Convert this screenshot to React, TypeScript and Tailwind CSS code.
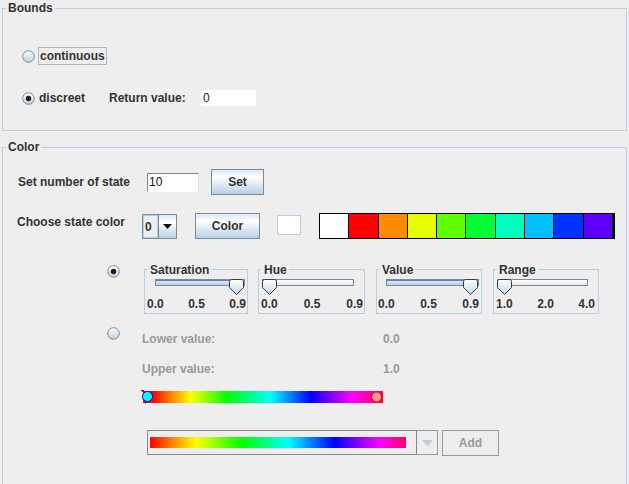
import React from "react";

const Radio = ({ checked = false }: { checked?: boolean }) => (
  <svg width="13" height="13" viewBox="0 0 13 13" className="shrink-0 block">
    <defs>
      <linearGradient id="rgrad" x1="0" y1="0" x2="0" y2="1">
        <stop offset="0" stopColor="#ffffff" />
        <stop offset="1" stopColor="#bccde2" />
      </linearGradient>
    </defs>
    <circle cx="6.5" cy="6.5" r="5.8" fill="url(#rgrad)" stroke="#7a8a99" strokeWidth="1" />
    {checked && <circle cx="6.5" cy="6.5" r="2.7" fill="#1e1e1e" />}
  </svg>
);

const Thumb = ({ cls }: { cls: string }) => (
  <svg width="15" height="16" viewBox="0 0 15 16" className={`absolute top-0 ${cls}`}>
    <defs>
      <linearGradient id="tgrad" x1="0" y1="0" x2="0" y2="1">
        <stop offset="0" stopColor="#ffffff" />
        <stop offset="1" stopColor="#c5d6ea" />
      </linearGradient>
    </defs>
    <path
      d="M0.5 2.5 Q0.5 0.5 2.5 0.5 H12.5 Q14.5 0.5 14.5 2.5 V8.5 L7.5 15.5 L0.5 8.5 Z"
      fill="url(#tgrad)"
      stroke="#3a3a3a"
      strokeWidth="1"
    />
  </svg>
);

const btn =
  "flex items-center justify-center border border-[#7a8a99] bg-[linear-gradient(to_bottom,#dde8f3_0%,#ffffff_30%,#b8cfe5_100%)] text-[#333333]";

type SP = {
  title: string;
  panelCls: string;
  trackCls: string;
  fillCls?: string;
  thumbCls: string;
  labels: [string, string, string];
  labelsCls: string;
};

const SliderPanel = ({ title, panelCls, trackCls, fillCls, thumbCls, labels, labelsCls }: SP) => (
  <div className={`relative h-[45px] border border-[#b8cfe5] ${panelCls}`}>
    <span className="absolute left-[3px] top-[-7px] bg-[#eeeeee] px-[2px] leading-[14px]">{title}</span>
    <div className="relative mt-[9px] h-[16px]">
      <div className={`mt-[5px] h-[7px] border border-[#7a8a99] bg-[linear-gradient(to_bottom,#ffffff,#e6e6e6)] ${trackCls}`}>
        {fillCls && (
          <div
            className={`h-full bg-[linear-gradient(to_bottom,#6382bf_0px,#6382bf_1px,#dde8f3_1px,#b8cfe5_100%)] ${fillCls}`}
          />
        )}
      </div>
      <Thumb cls={thumbCls} />
    </div>
    <div className={`mt-[2px] flex justify-between leading-[14px] ${labelsCls}`}>
      <span>{labels[0]}</span>
      <span>{labels[1]}</span>
      <span>{labels[2]}</span>
    </div>
  </div>
);

const stateColors = [
  "#ffffff",
  "#ff0000",
  "#ff8c00",
  "#e6ff00",
  "#5fff00",
  "#00ff33",
  "#00ffbf",
  "#00bfff",
  "#0033ff",
  "#5f00ff",
];

export default function App() {
  return (
    <div className="w-[629px] h-[484px] overflow-hidden bg-[#eeeeee] pt-[8px] pl-[2px] text-[#333333] font-bold text-[12px] leading-[14px] font-['Liberation_Sans',Arial,sans-serif]">
      {/* Bounds */}
      <div className="relative w-[625px] h-[123px] border border-[#b8cfe5]">
        <span className="absolute left-[3px] top-[-8px] bg-[#eeeeee] px-[2px] leading-[14px]">Bounds</span>
        <div className="mt-[38px] ml-[19px] flex h-[18px] items-center">
          <Radio />
          <div className="ml-[3px] flex h-[18px] items-center border border-[#a3b8cc] px-[1px]">continuous</div>
        </div>
        <div className="mt-[24px] ml-[19px] flex h-[18px] items-center">
          <Radio checked />
          <span className="ml-[4px] w-[70px]">discreet</span>
          <span className="w-[92px]">Return value:</span>
          <div className="flex h-[16px] w-[55px] items-center bg-white pl-[2px] font-normal text-[#222244]">0</div>
        </div>
      </div>

      {/* Color */}
      <div className="relative mt-[16px] w-[625px] h-[360px] border border-[#b8cfe5]">
        <span className="absolute left-[3px] top-[-8px] bg-[#eeeeee] px-[2px] leading-[14px]">Color</span>

        <div className="mt-[21px] ml-[15px] flex h-[26px] items-center">
          <span className="w-[129px]">Set number of state</span>
          <div className="flex h-[19px] w-[52px] items-center border border-[#7a8a99] border-r-[#e0e0e0] border-b-[#ffffff] bg-white pl-[1px] font-normal text-[#111]">
            10
          </div>
          <div className={`ml-[12px] h-[26px] w-[53px] ${btn}`}>Set</div>
        </div>

        <div className="mt-[18px] ml-[14px] flex h-[26px] items-start">
          <span className="mt-[2px] w-[125px]">Choose state color</span>
          <div className="mt-[1px] flex h-[25px] w-[35px] border border-[#7a8a99]">
            <div className="flex w-[15px] items-center border border-[#b8cfe5] bg-[#eeeeee] pl-[1px]">0</div>
            <div className="flex flex-1 items-center justify-center border-l border-[#7a8a99] bg-[linear-gradient(to_bottom,#dde8f3_0%,#ffffff_30%,#b8cfe5_100%)]">
              <svg width="9" height="5" viewBox="0 0 9 5">
                <path d="M0 0 H9 L4.5 5 Z" fill="#111" />
              </svg>
            </div>
          </div>
          <div className={`ml-[18px] h-[26px] w-[65px] ${btn}`}>Color</div>
          <div className="ml-[17px] mt-[2px] h-[20px] w-[24px] border border-[#b8cfe5] bg-white" />
          <div className="ml-[18px] flex h-[26px] w-[296px] border border-black">
            {stateColors.map((c, i) => (
              <div
                key={i}
                className="h-full flex-1 border-r border-black last:border-r-2"
                style={{ backgroundColor: c }}
              />
            ))}
          </div>
        </div>

        <div className="mt-[30px] ml-[104px] flex items-start">
          <div className="mt-[-4px]">
            <Radio checked />
          </div>
          <SliderPanel
            title="Saturation"
            panelCls="ml-[24px] w-[104px]"
            trackCls="ml-[10px] w-[90px]"
            fillCls="w-[80px]"
            thumbCls="left-[84px]"
            labels={["0.0", "0.5", "0.9"]}
            labelsCls="pl-[2px] pr-[1px]"
          />
          <SliderPanel
            title="Hue"
            panelCls="ml-[10px] w-[107px]"
            trackCls="ml-[3px] w-[92px]"
            thumbCls="left-[3px]"
            labels={["0.0", "0.5", "0.9"]}
            labelsCls="pl-[2px] pr-[1px]"
          />
          <SliderPanel
            title="Value"
            panelCls="ml-[11px] w-[106px]"
            trackCls="ml-[9px] w-[93px]"
            fillCls="w-[82px]"
            thumbCls="left-[86px]"
            labels={["0.0", "0.5", "0.9"]}
            labelsCls="pl-[1px] pr-[2px]"
          />
          <SliderPanel
            title="Range"
            panelCls="ml-[11px] w-[106px]"
            trackCls="ml-[3px] w-[91px]"
            thumbCls="left-[3px]"
            labels={["1.0", "2.0", "4.0"]}
            labelsCls="pl-[2px] pr-[3px]"
          />
        </div>

        <div className="mt-[13px] ml-[104px] flex items-start">
          <Radio />
          <div className="ml-[22px] flex flex-col text-[#999999]">
            <div className="mt-[5px] flex leading-[14px]">
              <span className="w-[241px]">Lower value:</span>
              <span>0.0</span>
            </div>
            <div className="mt-[16px] flex leading-[14px]">
              <span className="w-[241px]">Upper value:</span>
              <span>1.0</span>
            </div>
            <div className="relative mt-[15px] ml-[1px] h-[12px] w-[240px] bg-[linear-gradient(to_right,#ff0000_0%,#ff0000_4%,#ff8800_12%,#ffff00_20%,#00ff00_35%,#00ffff_53%,#0000ff_70%,#ff00ff_87%,#ff0050_100%)]">
              <svg width="13" height="14" viewBox="0 0 13 14" className="absolute left-[-2px] top-[-1px]">
                <path d="M0 0 H3 L1.5 2 Z" fill="#000" />
                <circle cx="6.5" cy="6.5" r="5" fill="#00ffff" stroke="#0000ee" strokeWidth="1" />
                <path d="M3.5 12.5 H5 V14 Z" fill="#000" />
              </svg>
              <svg width="12" height="12" viewBox="0 0 12 12" className="absolute left-[228px] top-0">
                <circle cx="5.5" cy="6" r="5" fill="#ff9999" stroke="#ee0000" strokeWidth="1" />
              </svg>
            </div>
            <div className="mt-[27px] ml-[5px] flex items-start">
              <div className="flex h-[25px] w-[291px]">
                <div className="flex h-full w-[270px] items-start border border-[#7a8a99] pt-[6px] pl-[2px]">
                  <div className="h-[11px] w-[256px] bg-[linear-gradient(to_right,#ff0000_0%,#ff8800_9%,#ffff00_18%,#00ff00_36%,#00ffff_54%,#0000ff_72%,#ff00ff_90%,#ff0060_100%)]" />
                </div>
                <div className="flex h-full flex-1 items-center justify-center border border-l-0 border-[#999999]">
                  <svg width="11" height="6" viewBox="0 0 11 6">
                    <path d="M0 0 H11 L5.5 6 Z" fill="#b8cfe5" />
                  </svg>
                </div>
              </div>
              <div className="ml-[4px] flex h-[26px] w-[57px] items-center justify-center border border-[#9a9a9a] text-[#999999]">
                Add
              </div>
            </div>
          </div>
        </div>
      </div>
    </div>
  );
}
